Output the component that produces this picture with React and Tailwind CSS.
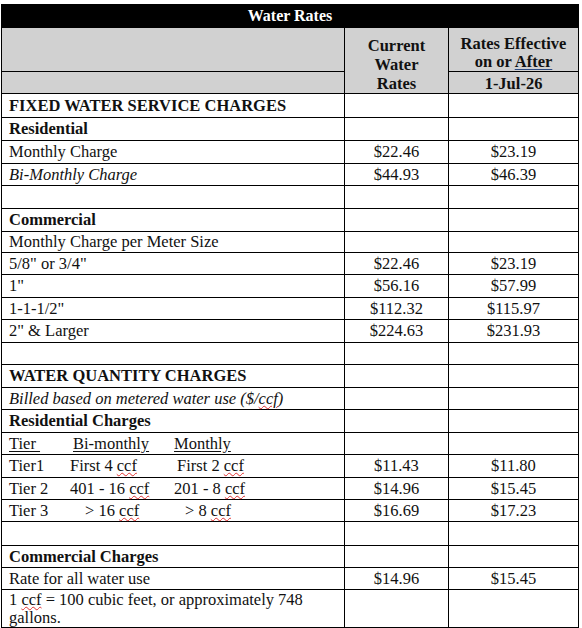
import React from "react";

const cell = "border-r border-b border-black flex items-center";

function Ccf() {
  return <span className="underline decoration-wavy decoration-[#e03030] decoration-1 underline-offset-[1px]">ccf</span>;
}

function Row({ h, label, a, b, bold, italic }) {
  return (
    <>
      <div
        className={`${cell} pl-[7px] ${h} ${bold ? "font-bold" : ""} ${italic ? "italic" : ""}`}
      >
        {label}
      </div>
      <div className={`${cell} justify-center ${h}`}>{a}</div>
      <div className={`${cell} justify-center ${h}`}>{b}</div>
    </>
  );
}

export default function App() {
  return (
    <div className="w-[582px] h-[628px] bg-white pt-[4px] pl-[1px] text-[16.5px] leading-[18px] text-[#111] font-['Liberation_Serif','Times_New_Roman',serif]">
      <div className="w-[578px] border-l border-t border-black grid grid-cols-[343px_104px_130px]">
        {/* Title */}
        <div className="col-span-3 h-[23px] bg-black text-white font-bold text-[16px] flex items-center justify-center border-r border-b border-black">
          Water Rates
        </div>

        {/* Header */}
        <div className="h-[44px] bg-[#d1d1d1] border-r border-b border-black" />
        <div className="row-span-2 h-[66px] overflow-hidden bg-[#d1d1d1] border-r border-b border-black font-bold flex flex-col items-center pt-[8px] leading-[19px]">
          <span>Current</span>
          <span>Water</span>
          <span>Rates</span>
        </div>
        <div className="h-[44px] bg-[#d1d1d1] border-r border-b border-black font-bold flex flex-col items-center pt-[7px] leading-[18px]">
          <span>Rates Effective</span>
          <span>
            on or <span className="underline decoration-[#2c4a82] underline-offset-2">After</span>
          </span>
        </div>
        <div className="h-[22px] bg-[#d1d1d1] border-r border-b border-black" />
        <div className="h-[22px] bg-[#d1d1d1] border-r border-b border-black font-bold flex items-center justify-center pt-[3px]">
          1-Jul-26
        </div>

        {/* Fixed charges */}
        <Row h="h-[24px]" bold label="FIXED WATER SERVICE CHARGES" />
        <Row h="h-[23px]" bold label="Residential" />
        <Row h="h-[23px]" label="Monthly Charge" a="$22.46" b="$23.19" />
        <Row h="h-[22px]" italic label="Bi-Monthly Charge" a="$44.93" b="$46.39" />
        <Row h="h-[23px]" />
        <Row h="h-[23px]" bold label="Commercial" />
        <Row h="h-[21px]" label="Monthly Charge per Meter Size" />
        <Row h="h-[22px]" label={'5/8" or 3/4"'} a="$22.46" b="$23.19" />
        <Row h="h-[23px]" label={'1"'} a="$56.16" b="$57.99" />
        <Row h="h-[22px]" label={'1-1-1/2"'} a="$112.32" b="$115.97" />
        <Row h="h-[23px]" label={'2" & Larger'} a="$224.63" b="$231.93" />
        <Row h="h-[22px]" />

        {/* Quantity charges */}
        <Row h="h-[23px]" bold label="WATER QUANTITY CHARGES" />
        <Row
          h="h-[22px]"
          italic
          label={
            <span>
              Billed based on metered water use ($/<Ccf />)
            </span>
          }
        />
        <Row h="h-[23px]" bold label="Residential Charges" />
        <Row
          h="h-[22px]"
          label={
            <span className="flex">
              <span className="w-[64px] underline underline-offset-2">Tier&nbsp;</span>
              <span className="w-[101px] underline underline-offset-2 self-start">Bi-monthly</span>
              <span className="underline underline-offset-2">Monthly</span>
            </span>
          }
        />
        <Row
          h="h-[23px]"
          label={
            <span className="flex">
              <span className="w-[61px]">Tier1</span>
              <span className="w-[107px]">First 4 <Ccf /></span>
              <span>First 2 <Ccf /></span>
            </span>
          }
          a="$11.43"
          b="$11.80"
        />
        <Row
          h="h-[22px]"
          label={
            <span className="flex">
              <span className="w-[61px]">Tier 2</span>
              <span className="w-[104px]">401 - 16 <Ccf /></span>
              <span>201 - 8 <Ccf /></span>
            </span>
          }
          a="$14.96"
          b="$15.45"
        />
        <Row
          h="h-[22px]"
          label={
            <span className="flex">
              <span className="w-[76px]">Tier 3</span>
              <span className="w-[100px]">&gt; 16 <Ccf /></span>
              <span>&gt; 8 <Ccf /></span>
            </span>
          }
          a="$16.69"
          b="$17.23"
        />
        <Row h="h-[24px]" />
        <Row h="h-[22px]" bold label="Commercial Charges" />
        <Row h="h-[22px]" label="Rate for all water use" a="$14.96" b="$15.45" />

        <div className="h-[38px] border-r border-b border-black pl-[7px] pr-[20px] pt-[1px] leading-[18px]">
          1 <Ccf /> = 100 cubic feet, or approximately 748 gallons.
        </div>
        <div className="h-[38px] border-r border-b border-black" />
        <div className="h-[38px] border-r border-b border-black" />
      </div>
    </div>
  );
}
